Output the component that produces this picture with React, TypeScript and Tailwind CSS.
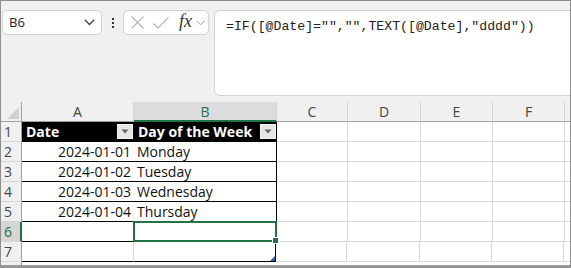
import React from 'react';

const COLS = [
  { key: 'A', w: 'w-[112px]' },
  { key: 'B', w: 'w-[143px]' },
  { key: 'C', w: 'w-[71px]' },
  { key: 'D', w: 'w-[73px]' },
  { key: 'E', w: 'w-[72px]' },
  { key: 'F', w: 'w-[72px]' },
];

const rows = [
  { n: 2, date: '2024-01-01', day: 'Monday' },
  { n: 3, date: '2024-01-02', day: 'Tuesday' },
  { n: 4, date: '2024-01-03', day: 'Wednesday' },
  { n: 5, date: '2024-01-04', day: 'Thursday' },
  { n: 6, date: '', day: '' },
  { n: 7, date: '', day: '' },
];

const FilterBtn = () => (
  <div className="w-[16px] h-[15px] bg-[#e6e6e6] border border-[#f4f4f4] flex items-center justify-center shrink-0">
    <svg width="8" height="5" viewBox="0 0 8 5">
      <path d="M0.5 0.5 L7.5 0.5 L4 4.5 Z" fill="#666" />
    </svg>
  </div>
);

const RowHead = ({ n, active }: { n: number | string; active?: boolean }) => (
  <div
    className={`w-[21px] h-full shrink-0 pl-[3px] flex items-center border-b border-[#d6d6d6] ${
      active ? 'bg-[#d6d6d6] text-[#217346] border-r-2 border-r-[#217346]' : 'bg-[#f0f0f0] text-[#444] border-r border-r-[#a0a0a0]'
    }`}
  >
    {n}
  </div>
);

const Blank = ({ w }: { w: string }) => <div className={`${w} h-full shrink-0 border-r border-b border-[#dadada] bg-white`} />;

export default function App() {
  return (
    <div
      className="w-[571px] h-[268px] border border-[#8e8e8e] bg-[#f0f0f0] flex flex-col overflow-hidden text-[14px]"
      style={{ fontFamily: '"Open Sans", sans-serif' }}
    >
      {/* formula bar area */}
      <div className="h-[101px] shrink-0 flex items-start pt-[9px] pl-[1px]">
        <div className="w-[100px] h-[25px] bg-white border border-[#d2d2d2] rounded-[5px] flex items-center justify-between pl-[6px] pr-[6px] text-[13px] text-[#222]">
          <span>B6</span>
          <svg width="11" height="7" viewBox="0 0 11 7">
            <path d="M0.8 0.8 L5.5 5.5 L10.2 0.8" fill="none" stroke="#444" strokeWidth="1.3" />
          </svg>
        </div>
        <div className="w-[21px] h-[25px] flex flex-col items-center justify-center gap-[2px]">
          <div className="w-[2px] h-[2px] bg-[#333]" />
          <div className="w-[2px] h-[2px] bg-[#333]" />
          <div className="w-[2px] h-[2px] bg-[#333]" />
        </div>
        <div className="w-[86px] h-[25px] bg-white border border-[#d2d2d2] rounded-[5px] flex items-center pl-[6px]">
          <svg width="13" height="13" viewBox="0 0 13 13" className="ml-[1px]">
            <path d="M0.5 0.5 L12.5 12.5 M12.5 0.5 L0.5 12.5" stroke="#b4b4b4" strokeWidth="1.1" />
          </svg>
          <svg width="16" height="12" viewBox="0 0 16 12" className="ml-[9px]">
            <path d="M0.5 6.5 L5 11 L15.5 0.5" fill="none" stroke="#b4b4b4" strokeWidth="1.1" />
          </svg>
          <span
            className="ml-[10px] italic text-[18px] leading-none text-[#333] -mt-[3px]"
            style={{ fontFamily: '"Liberation Serif", serif' }}
          >
            fx
          </span>
          <svg width="9" height="6" viewBox="0 0 9 6" className="ml-[4px]">
            <path d="M0.5 0.8 L4.5 4.8 L8.5 0.8" fill="none" stroke="#999" strokeWidth="1" />
          </svg>
        </div>
        <div className="flex-1 ml-[5px] -mr-[2px] h-[86px] bg-white border border-[#d2d2d2] rounded-l-[6px] pl-[11px] pt-[5px] text-[13.2px] leading-[18px] text-[#222]">
          <span style={{ fontFamily: '"Liberation Mono", monospace' }}>=IF([@Date]="","",TEXT([@Date],"dddd"))</span>
        </div>
      </div>

      {/* column headers */}
      <div className="h-[20px] shrink-0 flex text-[#444]">
        <div className="w-[21px] h-full shrink-0 border-r border-b border-[#a0a0a0] relative">
          <svg width="12" height="12" viewBox="0 0 12 12" className="absolute right-[2px] bottom-[2px]">
            <path d="M12 0 L12 12 L0 12 Z" fill="#d0d0d0" />
          </svg>
        </div>
        {COLS.map((c) => (
          <div
            key={c.key}
            className={`${c.w} h-full shrink-0 flex items-center justify-center border-r border-r-[#d4d4d4] ${
              c.key === 'B' ? 'bg-[#dcdcdc] text-[#217346] border-b-2 border-b-[#217346]' : 'border-b border-b-[#a0a0a0]'
            }`}
          >
            {c.key}
          </div>
        ))}
        <div className="flex-1 border-b border-[#a0a0a0]" />
      </div>

      {/* row 1: table header */}
      <div className="h-[20px] shrink-0 flex">
        <RowHead n={1} />
        <div className="w-[112px] h-full shrink-0 bg-black text-white font-bold flex items-center justify-between pl-[4px] pr-[1px] border-b border-black">
          <span>Date</span>
          <FilterBtn />
        </div>
        <div className="w-[143px] h-full shrink-0 bg-black text-white font-bold flex items-center justify-between pl-[4px] pr-[1px] border-b border-black">
          <span>Day of the Week</span>
          <FilterBtn />
        </div>
        {COLS.slice(2).map((c) => (
          <Blank key={c.key} w={c.w} />
        ))}
        <div className="flex-1 bg-white border-b border-[#dadada]" />
      </div>

      {rows.map((r) => (
        <div key={r.n} className="h-[20px] shrink-0 flex text-[#111]">
          <RowHead n={r.n} active={r.n === 6} />
          <div className="w-[112px] h-full shrink-0 bg-white border-b border-black flex items-center justify-end pr-[3px]">
            {r.date}
          </div>
          <div
            className={`w-[143px] h-full shrink-0 bg-white border-b border-r border-black flex items-center pl-[3px] relative ${
              r.n === 7 ? 'border-l border-l-[#dadada] -ml-px' : ''
            } ${r.n === 6 ? 'z-10' : ''}`}
          >
            {r.day}
            {r.n === 6 && (
              <div className="absolute -left-[1px] -top-[1px] -right-[1px] -bottom-[1px] border-2 border-[#217346] z-10">
                <div className="absolute -right-[4px] -bottom-[4px] w-[7px] h-[7px] bg-[#217346] border border-white" />
              </div>
            )}
            {r.n === 7 && (
              <svg width="5" height="5" viewBox="0 0 5 5" className="absolute right-0 bottom-0">
                <path d="M5 0 L5 5 L0 5 Z" fill="#3b5bb0" />
              </svg>
            )}
          </div>
          {COLS.slice(2).map((c) => (
            <Blank key={c.key} w={c.w} />
          ))}
          <div className="flex-1 bg-white border-b border-[#dadada]" />
        </div>
      ))}

      {/* partial row 8 */}
      <div className="flex-1 flex border-b-2 border-[#9a9a9a]">
        <div className="w-[21px] h-full shrink-0 bg-[#f0f0f0] border-r border-[#a0a0a0]" />
        <div className="flex-1 bg-white" />
      </div>
    </div>
  );
}
